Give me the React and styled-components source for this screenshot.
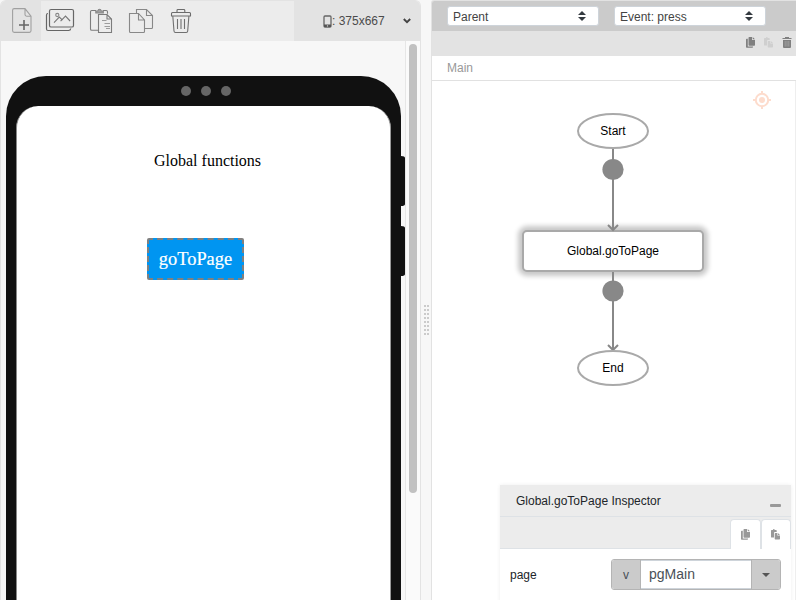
import React from "react";
import styled, { createGlobalStyle } from "styled-components";

const Global = createGlobalStyle`
  *, *::before, *::after { box-sizing: border-box; }
  body { margin: 0; overflow: hidden; background: #f7f7f7; font-family: "Liberation Sans", Arial, sans-serif; }
`;

const Workbench = styled.div`
  display: grid;
  grid-template-columns: 421px 10px 365px;
  height: 600px;
  width: 796px;
`;

const Designer = styled.section`
  display: flex;
  flex-direction: column;
  border: 1px solid #e3e3e3;
  border-bottom: 0;
  border-radius: 6px 6px 0 0;
  overflow: hidden;
`;

const Toolbar = styled.header`
  display: flex;
  height: 40px;
  flex: none;
  background: #ececec;
`;

const Tool = styled.button`
  width: 40px;
  height: 40px;
  padding: 0;
  border: 0;
  display: block;
  background: ${(p) => (p.$active ? "#e3e3e3" : "transparent")};
  svg { display: block; }
`;

const DevicePicker = styled.div`
  display: flex;
  align-items: center;
  width: 126px;
  margin-left: auto;
  padding: 0 9px 0 29px;
  background: #e3e3e3;
  color: #4b4b4b;
  font-size: 12px;
  white-space: pre;
  svg { flex: none; display: block; }
  svg:last-child { margin-left: auto; }
`;

const Stage = styled.div`
  display: flex;
  flex: 1;
  min-height: 0;
`;

const Viewport = styled.div`
  flex: 1;
  display: flex;
  align-items: flex-start;
  padding: 35px 0 0 5px;
  overflow: hidden;
  background: #f7f7f7;
`;

const ScrollTrack = styled.div`
  width: 15px;
  padding: 3px 3px 0 3px;
  border-left: 1px solid #e6e6e6;
  background: #fafafa;
`;

const ScrollThumb = styled.div`
  width: 8px;
  height: 449px;
  border-radius: 4px;
  background: #c1c1c1;
`;

const Phone = styled.div`
  width: 395px;
  height: 700px;
  flex: none;
  padding: 0 10px;
  background: #111;
  border-radius: 40px 40px 0 0;
`;

const Cameras = styled.div`
  display: flex;
  justify-content: center;
  align-items: center;
  gap: 10px;
  height: 30px;
  padding-left: 5px;
`;

const Lens = styled.i`
  width: 10px;
  height: 10px;
  border-radius: 50%;
  background: #666;
`;

const Screen = styled.div`
  height: 670px;
  padding: 45px 0 0 131px;
  background: #fff;
  border-left: 1px solid #888;
  border-right: 1px solid #999;
  border-top: 0;
  border-radius: 22px 22px 0 0;
  font-family: "Liberation Serif", "Times New Roman", serif;
`;

const ScreenTitle = styled.div`
  height: 20px;
  margin-left: 6px;
  font-size: 16px;
  line-height: 20px;
  color: #000;
`;

const PageButton = styled.button`
  display: block;
  width: 97px;
  height: 42px;
  margin-top: 67px;
  margin-left: -1px;
  padding: 0;
  border: 2px dashed #808080;
  border-radius: 2px;
  background: #0095f1;
  color: #fff;
  font: 18.4px/38px "Liberation Serif", "Times New Roman", serif;
  -webkit-text-stroke: 0.2px #fff;
`;

const SideKeys = styled.div`
  width: 4px;
  flex: none;
  display: flex;
  flex-direction: column;
  gap: 20px;
  padding-top: 80px;
`;

const SideKey = styled.div`
  height: 50px;
  background: #111;
  border-radius: 0 4px 4px 0 / 0 2px 2px 0;
`;

const Gutter = styled.div`
  display: grid;
  grid-template-columns: 2px 2px;
  grid-auto-rows: 2px;
  gap: 2px 1px;
  align-content: start;
  padding: 305px 0 0 3px;
  background: #f7f7f7;
`;

const Grip = styled.i`
  background: #cbcbcb;
`;

const Flow = styled.section`
  display: flex;
  flex-direction: column;
  border-left: 1px solid #e2e2e2;
  border-top: 1px solid #e2e2e2;
  border-radius: 3px 0 0 0;
  overflow: hidden;
  background: #fff;
`;

const Selectors = styled.div`
  display: flex;
  gap: 15px;
  height: 30px;
  flex: none;
  padding: 5px 0 0 15px;
  background: #cbcbcb;
`;

const Select = styled.div`
  display: flex;
  align-items: center;
  justify-content: space-between;
  width: 152px;
  height: 20px;
  padding: 2px 12px 0 5px;
  border: 1px solid #ced4da;
  border-radius: 3px;
  background: #fff;
  color: #444;
  font-size: 12px;
  line-height: 18px;
  svg { display: block; margin-top: -2px; }
`;

const Actions = styled.div`
  display: flex;
  justify-content: flex-end;
  align-items: center;
  gap: 9px;
  height: 25px;
  flex: none;
  padding: 0 4px 2px 0;
  background: #e3e3e3;
  svg { display: block; }
`;

const Breadcrumb = styled.div`
  height: 25px;
  flex: none;
  padding-left: 15px;
  border-bottom: 1px solid #e1e1e1;
  color: #999;
  font-size: 12px;
  line-height: 25px;
`;

const Canvas = styled.div`
  position: relative;
  flex: 1;
  border-right: 1px solid #eee;
`;

const Wires = styled.svg`
  position: absolute;
  left: 160px;
  top: 32px;
`;

const Target = styled.svg`
  position: absolute;
  left: 321px;
  top: 10px;
`;

const Node = styled.div`
  position: absolute;
  display: flex;
  align-items: center;
  justify-content: center;
  border: 2px solid #a9a9a9;
  background: #fff;
  color: #000;
  font-size: 12px;
`;

const Terminal = styled(Node)`
  left: 145px;
  top: ${(p) => p.$top}px;
  width: 72px;
  height: 36px;
  border-radius: 50%;
`;

const ActionNode = styled(Node)`
  left: 90px;
  top: 149px;
  width: 182px;
  height: 42px;
  border-radius: 5px;
  box-shadow: 0 0 5px 4px rgba(0, 0, 0, 0.22);
`;

const Inspector = styled.aside`
  position: absolute;
  left: 68px;
  top: 404px;
  width: 291px;
  height: 130px;
  background: #fff;
  box-shadow: 0 0 4px rgba(0, 0, 0, 0.07);
  font-size: 12px;
  color: #212529;
`;

const InspectorTitle = styled.div`
  display: flex;
  justify-content: space-between;
  height: 32px;
  padding: 0 10px 0 16px;
  border-bottom: 1px solid #dee2e6;
  background: #ececec;
  line-height: 32px;
`;

const Minimize = styled.i`
  width: 11px;
  height: 3px;
  margin-top: 19px;
  border-radius: 1px;
  background: #999;
`;

const Tabs = styled.div`
  display: flex;
  justify-content: flex-end;
  height: 32px;
  padding-top: 2px;
  border-bottom: 1px solid #dee2e6;
  background: #ececec;
`;

const Tab = styled.div`
  width: ${(p) => p.$width}px;
  height: 30px;
  padding: 9px 0 0 ${(p) => p.$inset}px;
  border: 1px solid #dee2e6;
  border-bottom: 0;
  border-radius: 4px 4px 0 0;
  background: #fff;
  svg { display: block; }
`;

const Field = styled.div`
  display: flex;
  align-items: flex-start;
  justify-content: space-between;
  padding: 10px 10px 0 10px;
  line-height: 32px;
`;

const InputGroup = styled.div`
  display: flex;
  width: 170px;
  height: 31px;
  border: 1px solid #b4b4b4;
  border-radius: 3px;
  overflow: hidden;
  line-height: 30px;
`;

const Addon = styled.div`
  display: flex;
  align-items: center;
  justify-content: center;
  width: 29px;
  background: #cbcbcb;
  color: #495057;
  border: 0 solid #b4b4b4;
  border-width: ${(p) => (p.$end ? "0 0 0 1px" : "0 1px 0 0")};
`;

const Value = styled.div`
  flex: 1;
  padding-left: 8px;
  color: #495057;
  font-size: 14px;
  line-height: 29px;
  box-shadow: inset 0 1px #ced4da, inset 0 -1px #ced4da;
`;

const toolShapes = {
  create: (
    <>
      <path d="M25 8.6H14.2q-1.600 0-1.600 1.600v20.600q0 1.600 1.600 1.600h15.200q1.600 0 1.600-1.600V16.200zM25 8.800v5.800q0 1.600 1.600 1.600H31" stroke="#a0a0a0" />
      <path d="M19 25h10M24 20v10" stroke="#666" strokeWidth="1.600" />
    </>
  ),
  image: (
    <>
      <rect x="49.5" y="9.500" width="24" height="17.500" rx="1.600" stroke="#666" strokeWidth="1.200" />
      <path d="M48 13.500q-1.500 0-1.500 1.500v14q0 1.500 1.500 1.500h20.500q2 0 2.300-2" stroke="#666" strokeWidth="1.200" />
      <circle cx="57.300" cy="15" r="1.600" stroke="#888" />
      <path d="M54 22.600l5.300-5.500 3.200 3.100m-1.900 1l4.900-5.100 4.600 4.900" stroke="#777" />
    </>
  ),
  paste: (
    <>
      <path d="M96 10.500h-4.200q-1.300 0-1.300 1.300v17.200q0 1.300 1.300 1.300H98M103 10.500h3.200q1.300 0 1.300 1.300v2" stroke="#7c7c7c" />
      <path d="M95.800 13v-2h2q.4-1.800 1.700-1.800t1.800 1.800h2v2z" fill="#a0a0a0" />
      <path d="M107 14.500h-8.500v18h13V19zM107 14.500V19h4.500" stroke="#7c7c7c" />
      <path d="M102 20.500h4.500M104.500 23.500h5.500M104.500 26.500h5.500M106 28.500h4" strokeWidth=".8" />
    </>
  ),
  copy: (
    <>
      <path d="M138.500 13.500h-9v18q0 1 1 1h13q1 0 1-1V20zM138.500 13.500V20h6" />
      <path d="M136.500 13V9.500h10l6 6v12q0 1-1 1h-7M146.500 9.500v6h6" />
    </>
  ),
  trash: (
    <>
      <path d="M171.500 16v-2.500q0-1 1-1h17q1 0 1 1V16zM177 12.400v-2q0-.9.9-.9h6q.9 0 .9.9v2" stroke="#6c6c6c" />
      <path d="M172.800 16l1.200 15q.1 1.500 1.500 1.500h10.700q1.400 0 1.500-1.500l1.200-15M177.500 19v10M181 19v10M184.500 19v10" stroke="#707070" />
    </>
  ),
};

// Shapes share the toolbar's coordinate space; each button shows its own slice.
function ToolIcon({ name, offset }) {
  return (
    <svg width="40" height="40" viewBox={`${offset} 1 40 40`} fill="none" stroke="#888" strokeWidth="1.1">
      {toolShapes[name]}
    </svg>
  );
}

function CopyIcon({ color = "#808080" }) {
  return (
    <svg width="9" height="11" viewBox="0 0 9 11" fill={color}>
      <path d="M3.300 0H6v3h3v5q0 .8-.8.8H3.300q-.8 0-.8-.8V.8q0-.8.8-.8zM6.700 0L9 2.300H6.700z" />
      <path d="M.7 1.800H1.800v7.700H7v.5q0 .7-.7.700H.7q-.7 0-.7-.7V2.500q0-.7.7-.7z" />
    </svg>
  );
}

function PasteIcon({ color = "#999" }) {
  return (
    <svg width="9" height="11" viewBox="0 0 9 11" fill={color}>
      <path d="M.7.900h1.200q.2-.9.900-.9t1 .9h1.200q.7 0 .7.700v1.500H4q-1 0-1 1v4.500H.7q-.7 0-.7-.7V1.600q0-.7.700-.7z" />
      <path d="M4.400 4H6.300v2.500H9v3.200q0 .7-.7.700H4.400q-.7 0-.7-.7v-5Q3.700 4 4.400 4zM6.900 4L9 6H6.900z" />
    </svg>
  );
}

function SortIcon() {
  return (
    <svg width="8" height="10" viewBox="0 0 8 10" fill="#343a40">
      <path d="M4 0l4 4H0zM4 10l4-4H0z" />
    </svg>
  );
}

const tools = ["create", "image", "paste", "copy", "trash"];

export default function App() {
  return (
    <>
      <Global />
      <Workbench>
        <Designer>
          <Toolbar>
            {tools.map((name, i) => (
              <Tool key={name} $active={i === 0} aria-label={name}>
                <ToolIcon name={name} offset={1 + i * 40} />
              </Tool>
            ))}
            <DevicePicker>
              <svg width="9" height="13" viewBox="0 0 9 13">
                <rect x="1" y="1" width="7" height="11" rx="1" fill="none" stroke="#666" strokeWidth="1.300" />
                <path d="M1 9.500h7V12H1z" fill="#555" />
                <circle cx="4.500" cy="10.900" r=".7" fill="#ddd" />
              </svg>
              <span>: 375x667</span>
              <svg width="8" height="6" viewBox="0 0 8 6" fill="none" stroke="#444" strokeWidth="1.900">
                <path d="M.8 1L4 4.200 7.200 1" />
              </svg>
            </DevicePicker>
          </Toolbar>
          <Stage>
            <Viewport>
              <Phone>
                <Cameras><Lens /><Lens /><Lens /></Cameras>
                <Screen>
                  <ScreenTitle>Global functions</ScreenTitle>
                  <PageButton>goToPage</PageButton>
                </Screen>
              </Phone>
              <SideKeys><SideKey /><SideKey /></SideKeys>
            </Viewport>
            <ScrollTrack><ScrollThumb /></ScrollTrack>
          </Stage>
        </Designer>

        <Gutter>
          {Array.from({ length: 16 }, (_, i) => <Grip key={i} />)}
        </Gutter>

        <Flow>
          <Selectors>
            <Select>Parent<SortIcon /></Select>
            <Select>Event: press<SortIcon /></Select>
          </Selectors>
          <Actions>
            <CopyIcon />
            <PasteIcon color="#cfcfcf" />
            <svg width="10" height="11" viewBox="0 0 10 11">
              <path d="M1 3h8v7q0 1-1 1H2q-1 0-1-1z" fill="#808080" />
              <path d="M.5 1.500h9M3 .6h4" stroke="#808080" strokeWidth="1.200" />
              <path d="M3.200 4v5.500M5 4v5.500M6.800 4v5.500" stroke="#b4b4b4" strokeWidth=".6" />
            </svg>
          </Actions>
          <Breadcrumb>Main</Breadcrumb>
          <Canvas>
            <Target width="18" height="18" viewBox="0 0 18 18" fill="none" stroke="#fddccd" strokeWidth="2">
              <circle cx="9" cy="9" r="6.200" />
              <circle cx="9" cy="9" r="3" fill="#fddccd" stroke="none" />
              <path d="M9 0v3M9 15v3M0 9h3M15 9h3" />
            </Target>
            <ActionNode>Global.goToPage</ActionNode>
            <Wires width="42" height="240" viewBox="0 0 42 240" fill="none" stroke="#888" strokeWidth="2">
              <path d="M21 35v82M16 112l5 5 5-5M21 159v78M16 232l5 5 5-5" />
              <circle cx="21" cy="56.500" r="10.600" fill="#888" stroke="none" />
              <circle cx="21" cy="178" r="10.600" fill="#888" stroke="none" />
            </Wires>
            <Terminal $top={32}>Start</Terminal>
            <Terminal $top={269}>End</Terminal>
            <Inspector>
              <InspectorTitle>Global.goToPage Inspector<Minimize /></InspectorTitle>
              <Tabs>
                <Tab $width={31} $inset={10}><CopyIcon color="#999" /></Tab>
                <Tab $width={30} $inset={9}><PasteIcon /></Tab>
              </Tabs>
              <Field>
                page
                <InputGroup>
                  <Addon>v</Addon>
                  <Value>pgMain</Value>
                  <Addon $end>
                    <svg width="8" height="4" viewBox="0 0 8 4" fill="#555"><path d="M0 0h8L4 4z" /></svg>
                  </Addon>
                </InputGroup>
              </Field>
            </Inspector>
          </Canvas>
        </Flow>
      </Workbench>
    </>
  );
}
